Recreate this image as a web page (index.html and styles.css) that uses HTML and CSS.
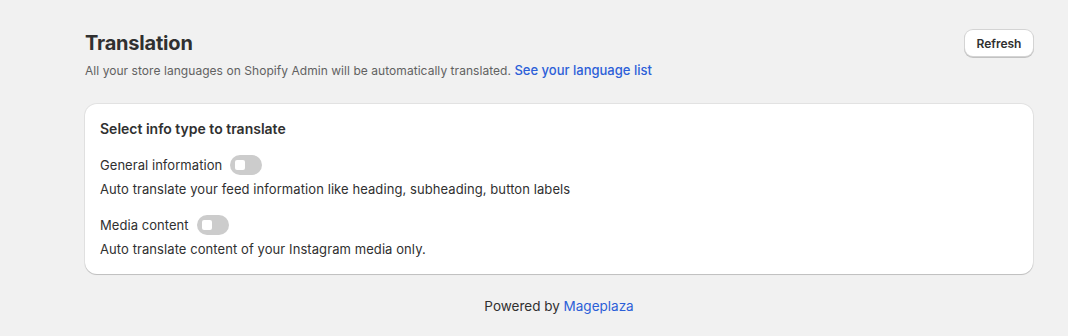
FILE: index.html
```html
<!DOCTYPE html>
<html>
<head>
<meta charset="utf-8">
<link rel="stylesheet" href="styles.css">
</head>
<body>
<div class="page">
  <div class="header">
    <div class="heading">
      <h1 class="title">Translation</h1>
      <p class="subtitle">All your store languages on Shopify Admin will be automatically translated. <a class="link link-sub" href="#">See your language list</a></p>
    </div>
    <button class="btn">Refresh</button>
  </div>
  <div class="card">
    <h2 class="card-title">Select info type to translate</h2>
    <div class="option">
      <div class="option-row"><span class="label">General information</span><span class="toggle"><span class="knob"></span></span></div>
      <p class="help">Auto translate your feed information like heading, subheading, button labels</p>
    </div>
    <div class="option">
      <div class="option-row"><span class="label">Media content</span><span class="toggle"><span class="knob"></span></span></div>
      <p class="help">Auto translate content of your Instagram media only.</p>
    </div>
  </div>
  <div class="footer">Powered by <a class="link" href="#">Mageplaza</a></div>
</div>
</body>
</html>
```
FILE: styles.css
```css
* { box-sizing: border-box; }
html, body { margin: 0; padding: 0; background: #f1f1f1; }
body { font-family: Inter, "Noto Sans", sans-serif; color: #303030; }
.page { width: 948px; margin-left: 85px; padding-top: 30px; }
.header { display: flex; justify-content: space-between; align-items: flex-start; }
.title { margin: 0; font-size: 20px; line-height: 26px; font-weight: 700; color: #303030; letter-spacing: -0.2px; }
.subtitle { margin: 6px 0 0; font-size: 12px; line-height: 16px; color: #616161; letter-spacing: 0.05px; }
.link { color: #2c5fd8; text-decoration: none; }
.link-sub { font-size: 13px; font-weight: 500; letter-spacing: 0; }
.btn { height: 26px; width: 68px; padding: 0; border: none; border-radius: 8px; background: #fff; font-family: inherit; font-size: 12px; font-weight: 600; color: #303030; box-shadow: 0 0 0 1px #d4d4d4, 0 1px 0 1px #c2c2c2; }
.card { margin-top: 25px; background: #fff; border-radius: 12px; padding: 15px 15px 15px; box-shadow: 0 1px 0 0 rgba(26,26,26,0.07), 0 0 0 1px rgba(0,0,0,0.06), 0 1px 1px rgba(0,0,0,0.1); }
.card-title { margin: 0; font-size: 14px; line-height: 20px; font-weight: 600; color: #303030; }
.option { margin-top: 16px; }
.option-row { display: flex; align-items: center; gap: 8px; height: 20px; }
.label { font-size: 13px; line-height: 20px; color: #303030; letter-spacing: 0.05px; }
.toggle { width: 32px; height: 20px; border-radius: 10px; background: #cccccc; position: relative; display: inline-block; }
.knob { position: absolute; left: 5px; top: 5px; width: 10px; height: 10px; border-radius: 2px; background: #fff; }
.help { margin: 4px 0 0; font-size: 13px; line-height: 20px; color: #303030; letter-spacing: 0.08px; }
.footer { margin-top: 22px; text-align: center; font-size: 13.5px; line-height: 20px; color: #303030; }
```
